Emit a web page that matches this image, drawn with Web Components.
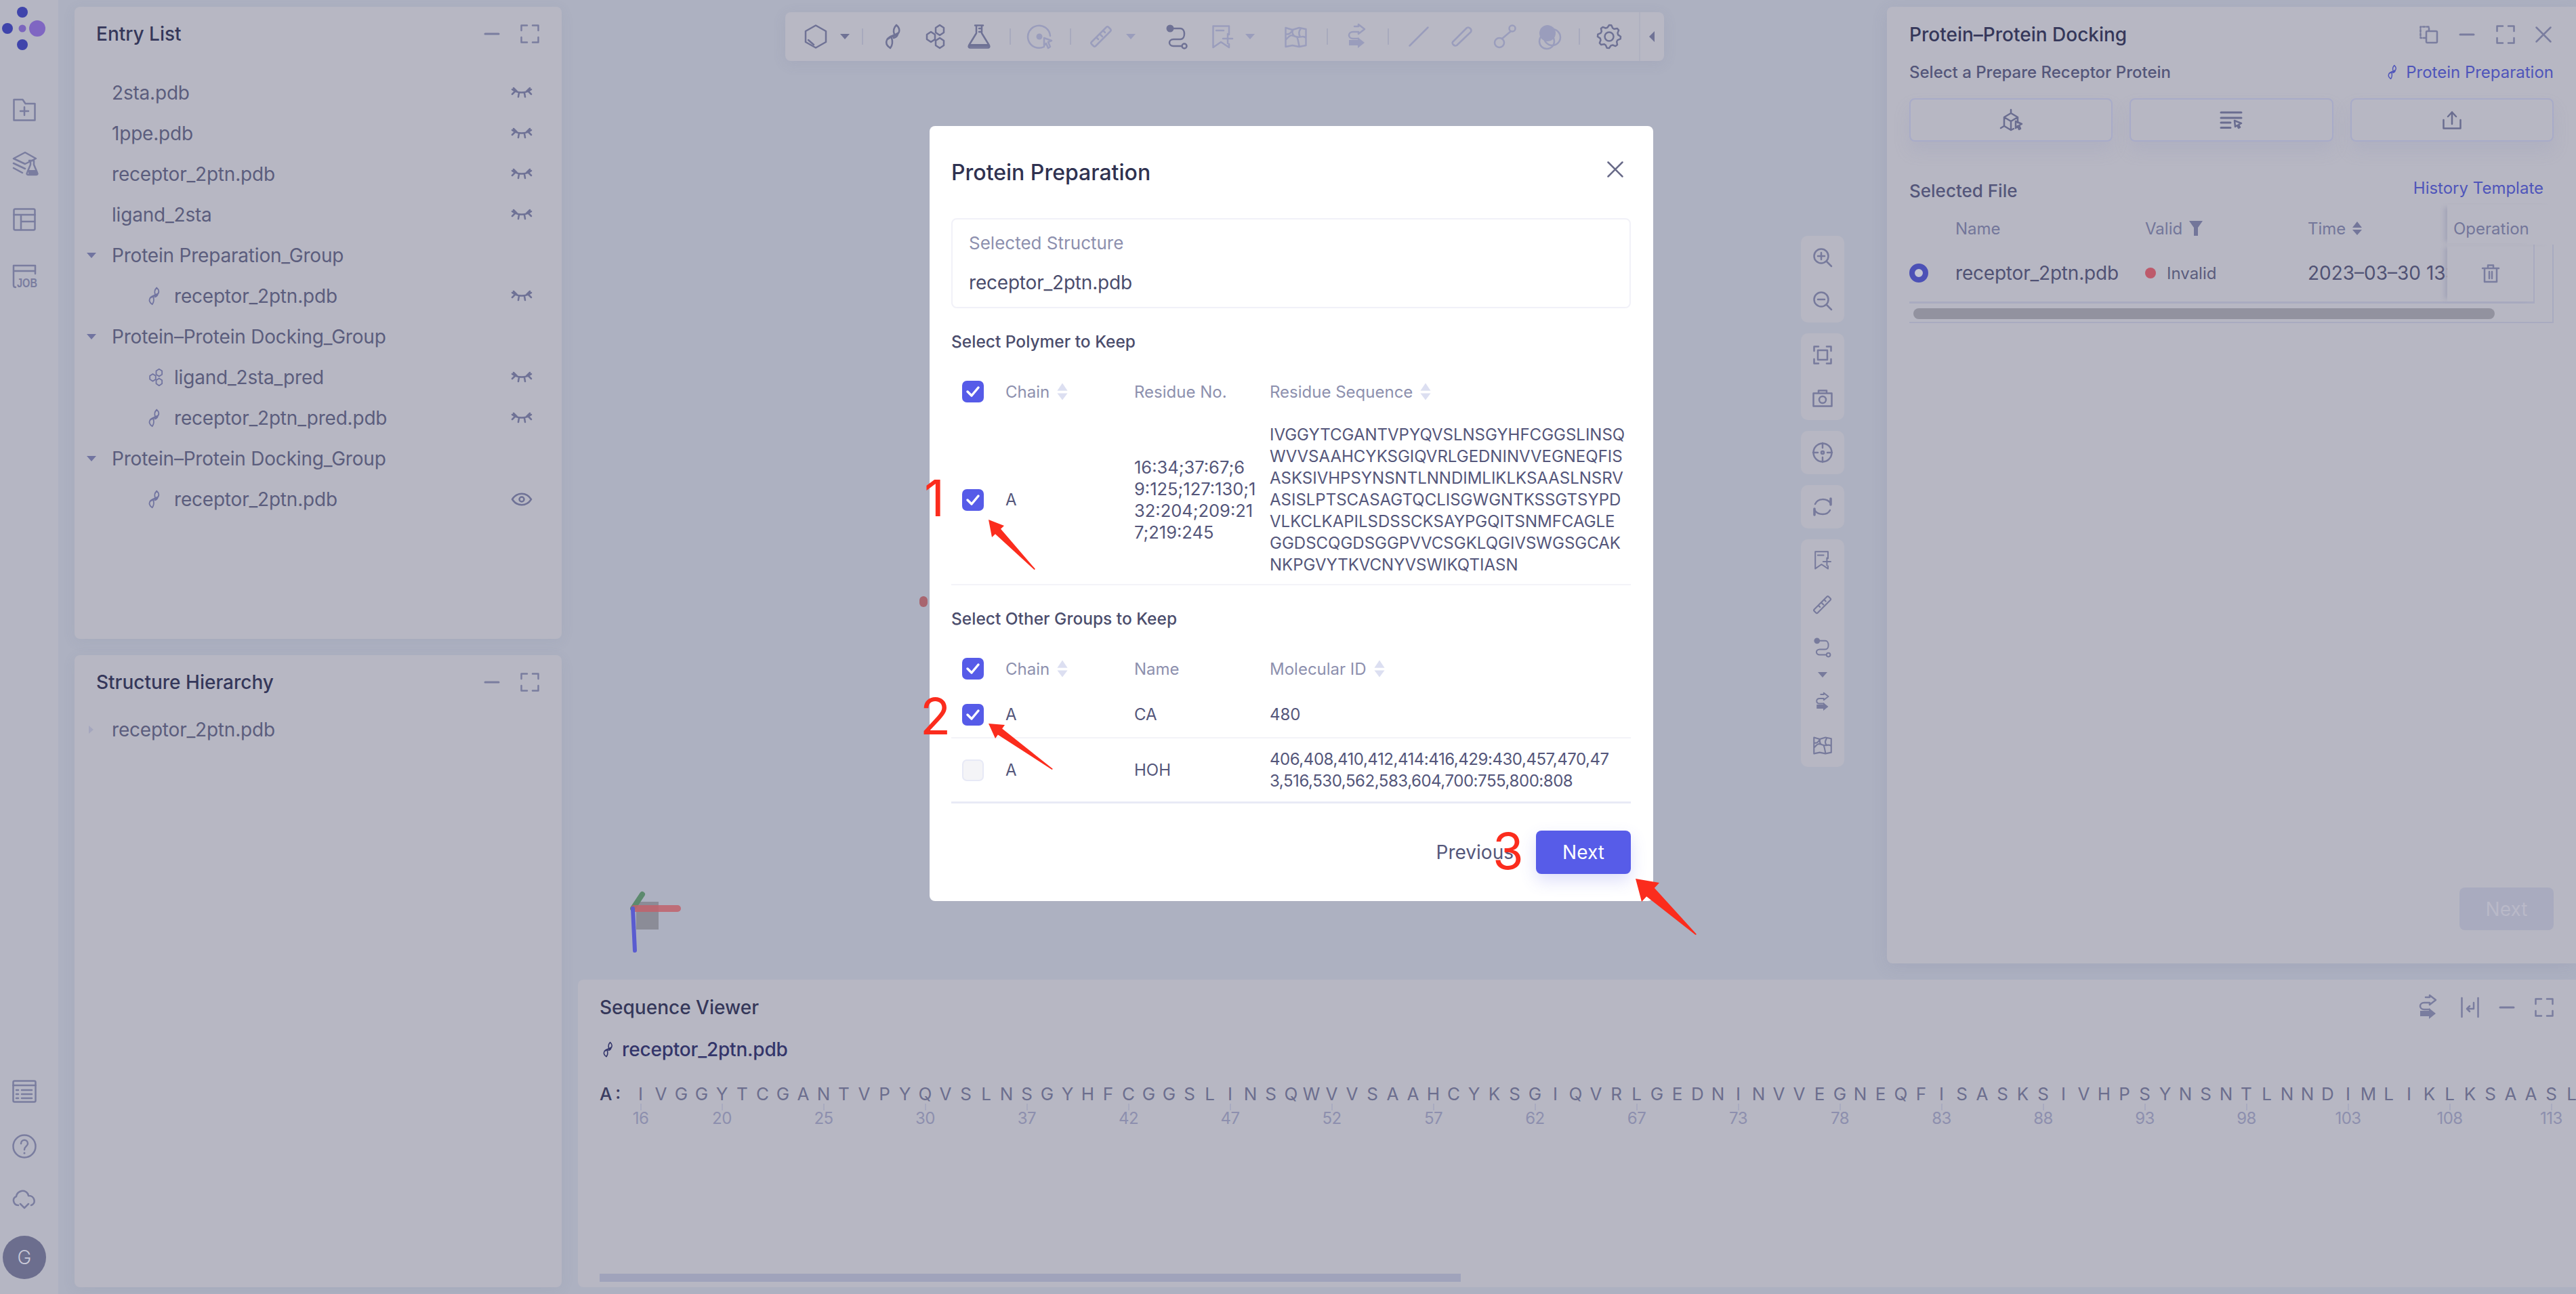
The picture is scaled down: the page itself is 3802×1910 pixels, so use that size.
<!DOCTYPE html>
<html><head><meta charset="utf-8"><title>Protein Preparation</title>
<style>
html,body{margin:0;padding:0;width:3802px;height:1910px;overflow:hidden;background:#adb1c1;font-family:Inter,"Liberation Sans",sans-serif}
</style></head><body>
<x-app></x-app>
<script>
function gear(){let p='';const n=8,c=18;for(let i=0;i<n*4;i++){const a=(i/(n*4))*Math.PI*2;const r=(i%4<2)?17:13.5;p+=(i?'L':'M')+(c+r*Math.sin(a)).toFixed(1)+' '+(c-r*Math.cos(a)).toFixed(1)}return p+'z'}
const fs='fill="currentColor" stroke="none"';
const ICONS={
 hexbox:[34,36,'<path d="M17 1.5L32 10v16L17 34.5 2 26V10z"/><path d="M6 23l8 7"/>'],
 ribbon:[26,36,'<path d="M17 1c5 4 6 10 1 14-3 2-6 2-9 4-3 2-5 2-6 4M17 1c-4 4-5 9-3 14M3 23c2-6 11-6 16-10M8 35c-6-4-7-8-5-12M8 35c3-4 4-9 2-15M19 13c1 3-2 6-6 7"/>'],
 mol:[30,36,'<path d="M22 1l6 4v7l-6 4-6-4V5zM22 20l6 4v7l-6 4-6-4v-7zM9 11l6 4v7l-6 4-6-4v-7z"/>'],
 flask:[36,36,'<path d="M12 1.5h12M14 1.5V13L3 31c-1 2 0 3.5 2 3.5h26c2 0 3-1.500 2-3.500L22 13V1.500M18 6h4M18 11h4"/><path d="M4 29h28v4H4z" '+fs+'/>'],
 disc:[37,36,'<path d="M24 33A16.500 16.500 0 1 1 33 17"/><circle cx="17" cy="18" r="4.500" '+fs+'/><path d="M24 20l11 4-5 2 3 7-3 2-3-7-3 3z"/>'],
 ruler:[32,32,'<path d="M2 24L24 2c1-1 2-1 3 0l3 3c1 1 1 2 0 3L8 30c-1 1-2 1-3 0l-3-3c-1-1-1-2 0-3zM9 17l3 3M14 12l4 4M19 7l3 3"/>'],
 path:[32,36,'<circle cx="6" cy="6" r="5.500" '+fs+'/><path d="M11 6h10c8 0 8 16 0 16H11c-8 0-8 10 0 10h11"/><circle cx="27" cy="32" r="3.500"/>'],
 bookmark:[30,35,'<path d="M25 14V1.500H1.500V33L13 25l12 8v-5M6 8h11M16 20h14M23 13v14"/>'],
 map:[33,32,'<path d="M1.500 3l10 3 10-3 10 2v24l-10 2-10-2-10 2zM1.500 21c7-8 8-8 15-5s10-3 15 2M12 6c-2 6 2 10 5 10s3 10 5 15M24 4c-3 4-4 8-1 12M2 12c4 2 8-2 10-6"/>'],
 swap:[29,38,'<path d="M11 4h6V1l9 7-9 7v-3H9c-8 0-8 10 0 10h8"/><path d="M3 24h13v-4l10 8-10 8v-4H3z" '+fs+'/>'],
 line:[30,30,'<path d="M1.500 28.500L28.500 1.500"/>'],
 stick:[30,30,'<path d="M2 23L23 2c2-1 4 0 5 1s2 3 1 5L8 28c-2 1-4 0-5-1s-2-3-1-4z"/>'],
 ballstick:[33,36,'<circle cx="8" cy="27" r="7"/><circle cx="27" cy="6" r="4.500"/><path d="M12 21L25 10"/>'],
 spheres:[38,38,'<circle cx="16" cy="26" r="11"/><circle cx="24" cy="20" r="12"/><circle cx="17" cy="14" r="12" '+fs+'/>'],
 gear:[36,36,'<path d="'+gear()+'"/><circle cx="18" cy="18" r="6.500"/>'],
 minus:[20,4,'<path d="M0 2h20" stroke-width="3"/>'],
 full:[28,28,'<path d="M1.500 9V1.500H10M18 1.500h8.500V9M26.500 19v7.500H18M10 26.500H1.500V19"/>'],
 close:[24,24,'<path d="M1.500 1.500l21 21M22.500 1.500l-21 21"/>'],
 copy:[28,26,'<path d="M9 18H1.500V1.500H14V8" stroke-dasharray="3 2.500"/><rect x="10" y="8" width="16" height="17" rx="1.500"/>'],
 eyeoff:[30,16,'<path d="M1 3c8 6 20 6 28 0M3 1l5 5M27 1l-5 5M11 8l-1 6M19 8l1 6M1 10l5-5M29 10l-5-5"/>'],
 eye:[30,20,'<path d="M1 10C8-1 22-1 29 10 22 21 8 21 1 10z"/><circle cx="15" cy="10" r="3.500"/>'],
 folder:[34,34,'<path d="M1.500 32.500V2h13l4 6h14v24.500zM17 13v12M11 19h12"/>'],
 layers:[39,37,'<path d="M2 11L19 2l16 9-16 8zM2 18l17 8M2 25l13 7"/><path d="M27 14v6l-5 12c-1 2 0 3 2 3h11c2 0 3-1 2-3l-5-12v-6zM25 14h6"/><path d="M24 28h12v6H24z" '+fs+'/>'],
 table:[34,34,'<rect x="1.500" y="1.500" width="31" height="31" rx="2"/><path d="M1.500 10h31M12 10v22M12 20h20"/>'],
 job:[38,36,'<path d="M2 31V2h32v12M2 10h32M2 31c0 2 1 3 3 3"/><text x="7" y="34" font-family="Liberation Sans" font-size="19" font-weight="700" fill="currentColor" stroke="none" textLength="30" lengthAdjust="spacingAndGlyphs">JOB</text>'],
 listwin:[36,34,'<rect x="1.500" y="1.500" width="33" height="31" rx="2"/><path d="M1.500 8h33M14 15h15M14 21h15M14 27h15"/><path d="M6 15h3M6 21h3M6 27h3"/>'],
 help:[36,36,'<circle cx="18" cy="18" r="16.500"/><path d="M13 14c0-7 10-7 10 0 0 4-5 4-5 9"/><circle cx="18" cy="28" r="1.500" '+fs+'/>'],
 cloud:[36,30,'<path d="M9 24C2 24-1 14 6 11c1-7 9-10 14-7 3 2 4 4 4 6 9-1 12 12 4 14M12 22l6 6 6-6"/>'],
 zoomin:[28,28,'<circle cx="12" cy="12" r="10.500"/><path d="M20 20l7 7M7 12h10M12 7v10"/>'],
 zoomout:[28,28,'<circle cx="12" cy="12" r="10.500"/><path d="M20 20l7 7M7 12h10"/>'],
 focus:[28,28,'<path d="M1.500 8V1.500H8M20 1.500h6.500V8M26.500 20v6.500H20M8 26.500H1.500V20"/><rect x="7" y="7" width="14" height="14"/>'],
 camera:[30,26,'<path d="M1.500 5.500h27v19h-27zM9 5V1.500h12V5"/><circle cx="15" cy="15" r="5"/>'],
 target:[30,30,'<circle cx="15" cy="15" r="13.500"/><path d="M15 1v7M15 22v7M1 15h7M22 15h7"/><circle cx="15" cy="15" r="2"/>'],
 refresh:[28,28,'<path d="M3 10C7 1 20 1 26 9M25 19C21 27 8 27 2 19"/><path d="M26 2v9M2 17v9" stroke-width="3.500"/>'],
 cube:[35,33,'<path d="M17 1v5M17 6l10 6v8M17 6L7 12v13l10 6 4-2M7 12l10 6v13M27 12l-10 6M7 25l-5 3"/><path d="M24 18l9 4-4 2 2 5-2 1-2-5-3 3z"/>'],
 listcur:[31,26,'<path d="M0 2h30M0 10h30M0 17h14M0 24.500h14" stroke-width="3"/><path d="M20 14l10 4-4 2 2 4-2 1-2-4-3 2z"/>'],
 upload:[28,27,'<path d="M14 19V1.500M8 8l6-6.500L20 8M1.500 13v12.500h25V13"/>'],
 wrap:[27,28,'<path d="M1.500 0v28M25.500 0v28M19 7v9h-9M13 12l-4 4 4 4"/>'],
 trash:[26,27,'<path d="M1 6h24M9 5V1.500h8V5M4 6v20h18V6M11 11v10M15 11v10"/>'],
 filter:[20,22,'<path d="M0 0h20l-7 10v12h-6V10z" '+fs+'/>'],
 down:[14,8,'<path d="M0 0h14L7 8z" '+fs+'/>'],
 tri:[14,20,'<path d="M7 0l7 9H0zM0 12h14l-7 8z" '+fs+'/>'],
 left:[8,16,'<path d="M8 0v16L0 8z" '+fs+'/>'],
 right:[8,12,'<path d="M0 0v12l7-6z" '+fs+'/>'],
 check:[20,16,'<path d="M2 8l6 6L18 2" stroke-width="3.500"/>']
};
function def(tag,css,html,init){
 customElements.define(tag,class extends HTMLElement{
  connectedCallback(){ if(this.shadowRoot) return;
   const s=this.attachShadow({mode:'open'});
   const h=typeof html==='function'?html(this):html;
   s.innerHTML='<style>'+css+'</style>'+h;
   if(init) init(this,s);
  }
 });
}
function ic(n,color,extra){return `<x-icon n="${n}" style="${color?'color:'+color+';':''}${extra||''}"></x-icon>`}
def('x-icon',':host{display:inline-flex;flex:none;line-height:0}svg{display:block;overflow:visible}',t=>{
 const d=ICONS[t.getAttribute('n')];const sc=parseFloat(t.getAttribute('s')||1);
 return `<svg width="${d[0]*sc}" height="${d[1]*sc}" viewBox="0 0 ${d[0]} ${d[1]}" fill="none" stroke="currentColor" stroke-width="2.5" stroke-linejoin="round" stroke-linecap="round">${d[2]}</svg>`;
});
const DIM='#7a7d9f',LIGHT='#9b9ebd';
/* sidebar */
def('x-sidebar',`:host{display:flex;flex-direction:column;align-items:center;width:72px;padding-right:14px;height:1910px;background:#b5b6c3;flex:none;box-sizing:content-box;color:${DIM}}
.logo{margin-top:10px;margin-left:-4px}.sp{flex:1}
.av{width:64px;height:64px;border-radius:50%;background:#6c6e8e;color:#c8c9d8;display:flex;align-items:center;justify-content:center;font-size:28px;margin-bottom:22px;font-weight:300}
x-icon{display:block}`,`
<svg class="logo" width="68" height="68" viewBox="0 0 68 68"><g fill="#3f44ab"><circle cx="33" cy="8" r="8"/><circle cx="11" cy="32" r="8"/><circle cx="33" cy="56" r="8"/></g><circle cx="33" cy="32" r="5.500" fill="#7b66bd"/><circle cx="55" cy="32" r="12" fill="#7f66c2"/></svg>
${ic('folder','', 'margin-top:67px')}${ic('layers','', 'margin-top:44px;margin-left:2px')}${ic('table','', 'margin-top:47px')}${ic('job','', 'margin-top:49px;margin-left:2px')}
<div class="sp"></div>
${ic('listwin')}${ic('help','','margin-top:46px')}${ic('cloud','','margin-top:45px')}
<div class="av" style="margin-top:39px">G</div>`);
/* panel */
def('x-panel',`:host{display:flex;flex-direction:column;background:#b7b7c3;border-radius:8px;box-shadow:0 4px 20px rgba(95,100,145,.08);overflow:hidden;box-sizing:border-box}
.h{display:flex;align-items:center;height:80px;padding:0 33px 0 32px;flex:none;color:${DIM}}
.t{flex:1;font-size:28px;font-weight:500;color:#35375a}
.a{display:flex;align-items:center;gap:32px}`,
 t=>`<div class="h"><div class="t">${t.getAttribute('title')}</div><div class="a">${ic('minus')}${ic('full')}</div></div><slot></slot>`);
def('x-row',`:host{display:flex;align-items:center;height:60px;font-size:28px;letter-spacing:-.2px;color:#5b5d7d;padding-right:44px}
.c{width:16px;margin-left:17px;margin-right:22px;display:flex;color:#7174a0;justify-content:center}
.i{display:flex;width:38px;margin-left:54px;color:#7174a0}
.n{flex:1}`,t=>{
 const caret=t.getAttribute('caret'),icon=t.getAttribute('icon'),eye=t.getAttribute('eye');
 return `<div class="c">${caret==='down'?ic('down'):caret==='right'?ic('right','#a5a7be'):''}</div>`+
 (icon?`<div class="i"><x-icon n="${icon}" s=".72"></x-icon></div>`:'')+
 `<div class="n"><slot></slot></div>`+(eye?ic(eye,'#6f7296'):'');
});
/* toolbar */
def('x-toolbar',`:host{display:flex;align-items:center;width:1297px;height:72px;background:#b8b8c4;border-radius:8px;box-shadow:0 4px 20px rgba(95,100,145,.1);margin:18px 0 0 306px;flex:none;position:relative}
.sep{width:2px;height:24px;background:#a8aabd;flex:none}.div{width:2px;height:72px;background:#b0b1c0;flex:none}`,'<div id="r" style="display:contents"></div>',(t,s)=>{
 const D='#6f7295',L='#9a9dbc',O=1159;
 const items=[['hexbox',1187,D],['down',1240,D],['|',1272],['ribbon',1306,D],['mol',1365,D],['flask',1427,D],['|',1490],['disc',1517,L],['|',1579],['ruler',1609,L],['down',1662,L],['path',1721,D],['bookmark',1789,L],['down',1838,L],['map',1896,L],['|',1958],['swap',1988,L],['|',2048],['line',2079,L],['stick',2142,L],['ballstick',2205,L],['spheres',2267,L],['|',2330],['gear',2357,D],['#',2419],['left',2434,D]];
 let x=O,h='';
 for(const it of items){const ml=it[1]-x;
  if(it[0]==='|'||it[0]==='#'){h+=`<div class="${it[0]==='|'?'sep':'div'}" style="margin-left:${ml}px"></div>`;x=it[1]+2;}
  else{const w=ICONS[it[0]][0];h+=`<x-icon n="${it[0]}" style="margin-left:${ml}px;color:${it[2]}"></x-icon>`;x=it[1]+w;}
 }
 s.getElementById('r').innerHTML=h;
});
/* side tools */
def('x-sidetools',`:host{display:flex;flex-direction:column;gap:16px;width:64px;margin-top:348px;flex:none;color:#777a9c}
.g{background:#b7b7c3;border-radius:10px;display:flex;flex-direction:column;align-items:center}
.i{display:flex;align-items:center;justify-content:center;width:100%;flex:none}`,()=>{
 const it=(n,h,x)=>`<div class="i" style="height:${h}px"><x-icon n="${n}" ${x||''}></x-icon></div>`;
 return `<div class="g">${it('zoomin',64)}${it('zoomout',64)}</div>
 <div class="g">${it('focus',64)}${it('camera',64)}</div>
 <div class="g">${it('target',64)}</div><div class="g">${it('refresh',64)}</div>
 <div class="g" style="height:336px">${it('bookmark',62,'s=".8"')}${it('ruler',70,'s=".85"')}${it('path',54,'s=".8"')}${it('down',28)}${it('swap',52,'s=".75"')}${it('map',76,'s=".85"')}</div>`;
});
/* file table */
def('x-filetable',`:host{display:block;font-size:24px;width:951px}
.g{display:grid;grid-template-columns:68px 280px 240px 206px 157px;align-items:center}
.head{height:59px;padding-top:11px;box-sizing:border-box;color:#73769a}
.hc{display:flex;align-items:center;gap:10px}
.body{height:116px;border-right:2px solid #a9abc0;border-bottom:2px solid #a9abc0;box-sizing:border-box}
.rowa{height:87px;margin-right:26px;border-right:2px solid #a9abc0;border-bottom:3px solid #a9abc0;box-sizing:border-box}
.rowg{height:84px;grid-template-columns:68px 280px 240px 206px 127px}
.radio{width:28px;height:28px;border-radius:50%;border:8px solid #4c51b6;box-sizing:border-box;background:#c3c4d2}
.nm{font-size:28px;color:#505274;white-space:nowrap;letter-spacing:-.2px}
.st{display:flex;align-items:center;gap:16px;color:#5b5d7d}
.dot{width:16px;height:16px;border-radius:50%;background:#bd5a6b}
.tm{font-size:28px;color:#505274;white-space:nowrap;overflow:hidden;height:100%;display:flex;align-items:center}
.op{height:100%;display:flex;align-items:center;justify-content:center;box-shadow:-8px 0 6px -4px rgba(120,124,160,.3);color:#7a7d9f}
.oph{box-shadow:-8px 0 6px -4px rgba(120,124,160,.3);height:59px;margin-top:-11px;display:flex;align-items:center;padding:11px 0 0 9px;box-sizing:border-box}
.th{height:16px;width:858px;margin:7px 0 0 6px;background:#92929f;border-radius:8px}`,
`<div class="g head"><div></div><div>Name</div><div class="hc">Valid ${ic('filter','#73769a')}</div><div class="hc">Time ${ic('tri','#73769a')}</div><div class="oph">Operation</div></div>
<div class="body"><div class="rowa"><div class="g rowg"><div class="radio"></div><div class="nm">receptor_2ptn.pdb</div><div class="st"><span class="dot"></span>Invalid</div><div class="tm">2023–03–30 13:45:12</div><div class="op">${ic('trash')}</div></div></div><div class="th"></div></div>`);
/* docking */
def('x-docking',`:host{display:flex;flex-direction:column;width:1017px;height:1412px;margin-top:10px;background:#b7b7c3;border-radius:8px 0 0 8px;box-shadow:0 6px 24px rgba(95,100,145,.12);padding:0 33px;box-sizing:border-box;flex:none;color:#54567a}
.h{display:flex;align-items:center;height:81px;flex:none}
.t{flex:1;font-size:28px;font-weight:500;color:#35375a}
.a{display:flex;align-items:center;color:${DIM};margin-right:3px}
.s{display:flex;align-items:center;justify-content:space-between;height:30px;font-size:24px;font-weight:500;color:#54567a}
.lk{display:flex;align-items:center;gap:12px;font-weight:400;color:#4f55ba}
.bs{display:grid;grid-template-columns:repeat(3,1fr);gap:25px;margin-top:24px;width:951px}
.b{height:64px;border:2px solid #a8abc8;border-radius:8px;display:flex;align-items:center;justify-content:center;box-sizing:border-box;box-shadow:0 14px 22px rgba(150,153,185,.22);color:#6a6d90}
.f{display:flex;justify-content:space-between;width:951px;height:42px;margin-top:51px;flex:none;font-size:26px;font-weight:500;align-items:center}
.ht{font-weight:400;color:#4f55ba;margin-right:15px;margin-top:-8px;font-size:24px}
.n{margin-top:auto;margin-bottom:49px;align-self:flex-end;width:139px;height:63px;background:#a9abbf;border-radius:8px;color:#b9b9c8;font-size:28px;display:flex;align-items:center;justify-content:center;box-sizing:border-box}`,
`<div class="h"><div class="t">Protein–Protein Docking</div><div class="a">${ic('copy')}${ic('minus','','margin-left:32px')}${ic('full','','margin-left:33px')}${ic('close','','margin-left:30px')}</div></div>
<div class="s"><span>Select a Prepare Receptor Protein</span><span class="lk"><x-icon n="ribbon" s=".58" style="color:#4f55ba"></x-icon>Protein Preparation</span></div>
<div class="bs"><div class="b">${ic('cube')}</div><div class="b">${ic('listcur')}</div><div class="b">${ic('upload')}</div></div>
<div class="f"><span>Selected File</span><span class="ht">History Template</span></div>
<x-filetable></x-filetable>
<div class="n">Next</div>`);
/* sequence */
const SEQ='IVGGYTCGANTVPYQVSLNSGYHFCGGSLINSQWVVSAAHCYKSGIQVRLGEDNINVVEGNEQFISASKSIVHPSYNSNTLNNDIMLIKLKSAASL';
const NUMS=[16,20,25,30,37,42,47,52,57,62,67,73,78,83,88,93,98,103,108,113];
def('x-seqviewer',`:host{display:flex;flex-direction:column;height:454px;background:#b7b7c3;border-radius:8px 0 0 8px;overflow:hidden;padding-left:32px;box-sizing:border-box;flex:none;position:relative}
.h{display:flex;align-items:center;height:82px;padding-right:33px;flex:none}
.t{flex:1;font-size:28px;font-weight:500;color:#35375a}
.a{display:flex;align-items:center;color:${DIM}}
.fl{display:flex;align-items:center;gap:12px;height:42px;font-size:28px;color:#33356a;flex:none;font-weight:500;padding-left:5px;letter-spacing:-.2px}
.seq{display:flex;margin-top:30px;flex:none;white-space:nowrap}
.lab{width:45.5px;height:30px;font-size:26px;font-weight:500;color:#3c3e62;line-height:30px;flex:none;word-spacing:-2px}
.c{width:30px;flex:none;display:flex;flex-direction:column;align-items:center;position:relative}
.l{height:30px;line-height:30px;font-size:26px;color:#6c6e8e}
.k{width:2px;height:10px;background:#a9abc0;margin-top:-1px}
.nm{height:24px;line-height:24px;font-size:24px;color:#8d8fae;letter-spacing:-.5px}
.sb{margin-top:auto;margin-bottom:8px;width:1271px;height:12px;background:#a0a3bb;flex:none}`,
()=>{let c='';[...SEQ].forEach((ch,i)=>{
 const n=i===0?0:((i+1)%5===0?(i+1)/5:null);
 const num=n!==null&&NUMS[n]!==undefined?NUMS[n]:null;
 c+=`<div class="c"><div class="l">${ch}</div>${num!==null?`<div class="k"></div><div class="nm">${num}</div>`:''}</div>`;});
 return `<div class="h"><div class="t">Sequence Viewer</div><div class="a">${ic('swap','','margin-right:34px')}${ic('wrap','','margin-right:31px')}${ic('minus','','margin-right:31px')}${ic('full')}</div></div>
 <div class="fl"><x-icon n="ribbon" s=".62" style="color:#33356a"></x-icon><span>receptor_2ptn.pdb</span></div>
 <div class="seq"><div class="lab">A :</div>${c}</div><div class="sb"></div>`;});
/* checkbox, sort */
def('x-check',`:host{display:flex;width:32px;height:32px;box-sizing:border-box;border-radius:7px;background:#565be8;align-items:center;justify-content:center;color:#fff;flex:none}
:host([off]){background:#f4f4f7;border:2px solid #e7e9f6}`,t=>t.hasAttribute('off')?'':ic('check'));
def('x-sort',':host{display:inline-flex;margin-left:12px;color:#dcdff1}',ic('tri','#dcdff1','transform:scale(1.08,1.25)'));
/* modal */
def('x-modal',`:host{position:absolute;left:1372px;top:186px;width:1068px;height:1144px;background:#fff;border-radius:8px;padding:0 33px 0 32px;box-sizing:border-box;display:flex;flex-direction:column;font-size:24px;color:#54567a}
.h{height:136px;display:flex;align-items:center;flex:none}
.t{flex:1;font-size:32px;font-weight:500;color:#2f3150}
.x{color:#686a88;margin-right:11px;margin-top:-2px}
.box{height:133px;border:2px solid #f1f1f8;border-radius:8px;box-sizing:border-box;padding-left:24px;flex:none}
.lb{height:30px;line-height:30px;margin-top:20px;color:#8d90ae;font-size:26px}
.vl{height:40px;line-height:40px;margin-top:23px;font-size:28px;color:#4a4c6c;letter-spacing:-.2px}
.sec{height:40px;line-height:40px;font-weight:500;color:#4b4d6c;flex:none;font-size:24.5px}
.g{display:grid;grid-template-columns:80px 190px 200px 1fr;align-items:center;flex:none}
.ck{padding-left:16px}
.hd{height:68px;color:#8d90ae}
.hc{display:flex;align-items:center}
.r1{height:248px;padding-top:2px;border-bottom:2px solid #f3f3f8;box-sizing:content-box;line-height:32px;color:#54567a}
.r2{height:67px;border-bottom:2px solid #f3f3f8}
.r3{height:93px;border-bottom:3px solid #e8eaf6;line-height:32px}
.num{font-size:25.500px}
.ids{letter-spacing:-.45px}
.ft{display:flex;align-items:center;justify-content:flex-end;margin-top:40px;flex:none;font-size:28px}
.pv{color:#55577a;margin-right:33px}
.nx{width:140px;height:64px;border-radius:8px;background:#575ce8;color:#fff;display:flex;align-items:center;justify-content:center;box-shadow:0 10px 24px rgba(87,92,232,.2)}`,
`<div class="h"><div class="t">Protein Preparation</div><div class="x">${ic('close')}</div></div>
<div class="box"><div class="lb">Selected Structure</div><div class="vl">receptor_2ptn.pdb</div></div>
<div class="sec" style="margin-top:29px">Select Polymer to Keep</div>
<div class="g hd" style="margin-top:20px"><div class="ck"><x-check></x-check></div><div class="hc">Chain<x-sort></x-sort></div><div>Residue No.</div><div class="hc">Residue Sequence<x-sort></x-sort></div></div>
<div class="g r1"><div class="ck"><x-check></x-check></div><div>A</div><div class="num">16:34;37:67;6<br>9:125;127:130;1<br>32:204;209:21<br>7;219:245</div><div>IVGGYTCGANTVPYQVSLNSGYHFCGGSLINSQ<br>WVVSAAHCYKSGIQVRLGEDNINVVEGNEQFIS<br>ASKSIVHPSYNSNTLNNDIMLIKLKSAASLNSRV<br>ASISLPTSCASAGTQCLISGWGNTKSSGTSYPD<br>VLKCLKAPILSDSSCKSAYPGQITSNMFCAGLE<br>GGDSCQGDSGGPVVCSGKLQGIVSWGSGCAK<br>NKPGVYTKVCNYVSWIKQTIASN</div></div>
<div class="sec" style="margin-top:29px">Select Other Groups to Keep</div>
<div class="g hd" style="margin-top:20px"><div class="ck"><x-check></x-check></div><div class="hc">Chain<x-sort></x-sort></div><div>Name</div><div class="hc">Molecular ID<x-sort></x-sort></div></div>
<div class="g r2"><div class="ck"><x-check></x-check></div><div>A</div><div>CA</div><div>480</div></div>
<div class="g r3"><div class="ck"><x-check off></x-check></div><div>A</div><div>HOH</div><div class="ids">406,408,410,412,414:416,429:430,457,470,47<br>3,516,530,562,583,604,700:755,800:808</div></div>
<div class="ft"><div class="pv">Previous</div><div class="nx">Next</div></div>`);
/* annotation */
function arrow(tip,a,b,tail){
 const nx=(a[0]+b[0])/2,ny=(a[1]+b[1])/2;
 const m1=[a[0]+(nx-a[0])*.55,a[1]+(ny-a[1])*.55],m2=[b[0]+(nx-b[0])*.55,b[1]+(ny-b[1])*.55];
 return `<polygon fill="#fb2c1d" points="${[tip,a,m1,tail,[tail[0]-1.5,tail[1]+1],m2,b].map(p=>p.join(',')).join(' ')}"/>`;
}
def('x-annot',`:host{position:absolute;left:0;top:0;width:3802px;height:1910px;pointer-events:none}
svg{position:absolute;left:0;top:0}
.d{position:absolute;font-family:Inter,sans-serif;font-weight:400;font-size:74px;line-height:74px;color:#fb2c1d}`,
`<svg width="3802" height="1910">${arrow([1459,767],[1482,776],[1464,793],[1528,840])}${arrow([1459,1068],[1483,1070],[1469,1090],[1554,1135])}${arrow([2414,1297],[2449,1303],[2423,1331],[2504,1379])}</svg>
<div class="d" style="left:1364px;top:698px">1</div><div class="d" style="left:1358px;top:1020px">2</div><div class="d" style="left:2203px;top:1219px">3</div>`);
/* app */
def('x-app',`:host{display:flex;width:3802px;height:1910px;position:relative;overflow:hidden}
.left{display:flex;flex-direction:column;gap:24px;width:719px;margin:10px 24px 10px 24px;flex:none}
.left x-panel{flex:1}
.list{padding-top:17px}
.right{display:flex;flex-direction:column;flex:1;height:1900px;min-width:0}
.top{display:flex;height:1446px;flex:none}
.canvas{flex:1;position:relative;min-width:0;display:flex;align-items:flex-start}
.gap{width:63px;flex:none}
.giz{position:absolute;left:77px;top:1315px}
.mark{position:absolute;left:504px;top:880px;width:12px;height:16px;border-radius:6px;background:#a8656f}`,
`<x-sidebar></x-sidebar>
<div class="left">
<x-panel title="Entry List"><div class="list">
<x-row eye="eyeoff">2sta.pdb</x-row><x-row eye="eyeoff">1ppe.pdb</x-row><x-row eye="eyeoff">receptor_2ptn.pdb</x-row><x-row eye="eyeoff">ligand_2sta</x-row>
<x-row caret="down">Protein Preparation_Group</x-row><x-row icon="ribbon" eye="eyeoff">receptor_2ptn.pdb</x-row>
<x-row caret="down">Protein–Protein Docking_Group</x-row><x-row icon="mol" eye="eyeoff">ligand_2sta_pred</x-row><x-row icon="ribbon" eye="eyeoff">receptor_2ptn_pred.pdb</x-row>
<x-row caret="down">Protein–Protein Docking_Group</x-row><x-row icon="ribbon" eye="eye">receptor_2ptn.pdb</x-row>
</div></x-panel>
<x-panel title="Structure Hierarchy"><div class="list" style="padding-top:0"><x-row caret="right">receptor_2ptn.pdb</x-row></div></x-panel>
</div>
<div class="right"><div class="top">
<div class="canvas"><x-toolbar></x-toolbar><div class="mark"></div>
<svg class="giz" width="80" height="95" viewBox="0 0 80 95"><rect x="9" y="16" width="33" height="41" fill="#8b8c97"/><path d="M4 26L18 5" stroke="#5c8a6e" stroke-width="8" stroke-linecap="round"/><path d="M6 26H70" stroke="#c2626c" stroke-width="10" stroke-linecap="round" opacity=".85"/><path d="M4 26L7 88" stroke="#5a5cd0" stroke-width="6" stroke-linecap="round"/></svg>
</div><x-sidetools></x-sidetools><div class="gap"></div><x-docking></x-docking></div>
<x-seqviewer></x-seqviewer></div>
<x-modal></x-modal><x-annot></x-annot>`);
</script></body></html>
